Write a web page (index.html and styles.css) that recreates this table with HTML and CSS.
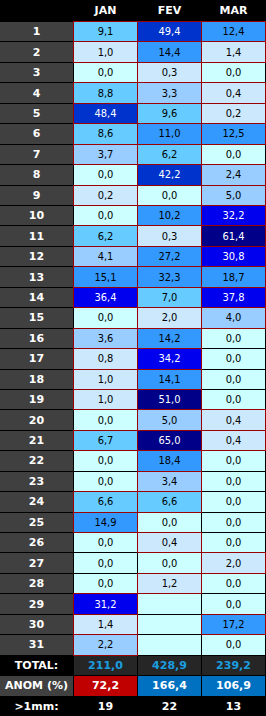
FILE: index.html
```html
<!DOCTYPE html>
<html>
<head>
<meta charset="utf-8">
<link rel="stylesheet" href="styles.css">
</head>
<body>
<div class="tbl">
  <div class="hd"></div><div class="hd">JAN</div><div class="hd">FEV</div><div class="hd">MAR</div>
  <div class="lb">1</div><div class="c v6 rb">9,1</div><div class="c v8 rb">49,4</div><div class="c v5 rb">12,4</div>
  <div class="lb">2</div><div class="c v2 rb">1,0</div><div class="c v5 rb">14,4</div><div class="c v2 rb">1,4</div>
  <div class="lb">3</div><div class="c v0">0,0</div><div class="c v2 rb">0,3</div><div class="c v0">0,0</div>
  <div class="lb">4</div><div class="c v6 rb">8,8</div><div class="c v3 rb">3,3</div><div class="c v2 rb">0,4</div>
  <div class="lb">5</div><div class="c v8 rb">48,4</div><div class="c v6 rb">9,6</div><div class="c v2 rb">0,2</div>
  <div class="lb">6</div><div class="c v6 rb">8,6</div><div class="c v5 rb">11,0</div><div class="c v5 rb">12,5</div>
  <div class="lb">7</div><div class="c v3 rb">3,7</div><div class="c v6 rb">6,2</div><div class="c v0">0,0</div>
  <div class="lb">8</div><div class="c v0">0,0</div><div class="c v8 rb">42,2</div><div class="c v3 rb">2,4</div>
  <div class="lb">9</div><div class="c v2 rb">0,2</div><div class="c v0">0,0</div><div class="c v3 rb">5,0</div>
  <div class="lb">10</div><div class="c v0">0,0</div><div class="c v5 rb">10,2</div><div class="c v7 rb">32,2</div>
  <div class="lb">11</div><div class="c v6 rb">6,2</div><div class="c v2 rb">0,3</div><div class="c v9 rb">61,4</div>
  <div class="lb">12</div><div class="c v3 rb">4,1</div><div class="c v5 rb">27,2</div><div class="c v7 rb">30,8</div>
  <div class="lb">13</div><div class="c v5 rb">15,1</div><div class="c v5 rb">32,3</div><div class="c v5 rb">18,7</div>
  <div class="lb">14</div><div class="c v7 rb">36,4</div><div class="c v6 rb">7,0</div><div class="c v7 rb">37,8</div>
  <div class="lb">15</div><div class="c v0">0,0</div><div class="c v2 rb">2,0</div><div class="c v3 rb">4,0</div>
  <div class="lb">16</div><div class="c v3 rb">3,6</div><div class="c v5 rb">14,2</div><div class="c v0">0,0</div>
  <div class="lb">17</div><div class="c v2 rb">0,8</div><div class="c v7 rb">34,2</div><div class="c v0">0,0</div>
  <div class="lb">18</div><div class="c v2 rb">1,0</div><div class="c v5 rb">14,1</div><div class="c v0">0,0</div>
  <div class="lb">19</div><div class="c v2 rb">1,0</div><div class="c v9 rb">51,0</div><div class="c v0">0,0</div>
  <div class="lb">20</div><div class="c v0">0,0</div><div class="c v3 rb">5,0</div><div class="c v2 rb">0,4</div>
  <div class="lb">21</div><div class="c v6 rb">6,7</div><div class="c v9 rb">65,0</div><div class="c v2 rb">0,4</div>
  <div class="lb">22</div><div class="c v0">0,0</div><div class="c v5 rb">18,4</div><div class="c v0">0,0</div>
  <div class="lb">23</div><div class="c v0">0,0</div><div class="c v3 rb">3,4</div><div class="c v0">0,0</div>
  <div class="lb">24</div><div class="c v6 rb">6,6</div><div class="c v6 rb">6,6</div><div class="c v0">0,0</div>
  <div class="lb">25</div><div class="c v5 rb">14,9</div><div class="c v0">0,0</div><div class="c v0">0,0</div>
  <div class="lb">26</div><div class="c v0">0,0</div><div class="c v2 rb">0,4</div><div class="c v0">0,0</div>
  <div class="lb">27</div><div class="c v0">0,0</div><div class="c v0">0,0</div><div class="c v2 rb">2,0</div>
  <div class="lb">28</div><div class="c v0">0,0</div><div class="c v2 rb">1,2</div><div class="c v0">0,0</div>
  <div class="lb">29</div><div class="c v7 rb">31,2</div><div class="c v0"></div><div class="c v0">0,0</div>
  <div class="lb">30</div><div class="c v2 rb">1,4</div><div class="c v0"></div><div class="c v5 rb">17,2</div>
  <div class="lb">31</div><div class="c v3 rb">2,2</div><div class="c v0"></div><div class="c v0">0,0</div>
  <div class="sl">TOTAL:</div><div class="tot">211,0</div><div class="tot">428,9</div><div class="tot">239,2</div>
  <div class="sl gray">ANOM (%)</div><div class="an neg">72,2</div><div class="an pos">166,4</div><div class="an pos">106,9</div>
  <div class="sl">&gt;1mm:</div><div class="cnt">19</div><div class="cnt">22</div><div class="cnt">13</div>
</div>
</body>
</html>
```
FILE: styles.css
```css
html, body {
  margin: 0;
  padding: 0;
  background: #000;
}
.tbl {
  width: 265px;
  height: 716px;
  padding-right: 1px;
  display: grid;
  grid-template-columns: 73px 63px 63px 63px;
  grid-template-rows: 21px repeat(34, 1fr);
  column-gap: 1px;
  row-gap: 1px;
  background: #000;
  font-family: "DejaVu Sans Condensed", "DejaVu Sans", sans-serif;
  font-stretch: condensed;
  font-size: 11px;
}
.tbl > div {
  display: flex;
  align-items: center;
  justify-content: center;
  white-space: nowrap;
}
.hd, .lb, .sl, .tot, .an, .cnt {
  font-family: "DejaVu Sans", sans-serif;
  font-stretch: normal;
  font-weight: bold;
}
.hd {
  background: #000;
  color: #fff;
}
.lb {
  background: #404040;
  color: #fff;
}
.c { color: #000; }
.rb { box-shadow: 0 0 0 1px #9a0000; }
.v0 { background: #ccffff; }
.v2 { background: #cce8fc; }
.v3 { background: #99ccff; }
.v6 { background: #66ccff; }
.v5 { background: #3399ff; }
.v7 { background: #0000ee; color: #fff; }
.v8 { background: #0033cc; color: #fff; }
.v9 { background: #000088; color: #fff; }
.sl {
  background: #000;
  color: #fff;
}
.sl.gray { background: #404040; }
.tot {
  background: #262626;
  color: #1a9ee0;
}
.an { color: #fff; }
.an.neg { background: #c00000; }
.an.pos { background: #0070c0; }
.cnt {
  background: #000;
  color: #fff;
}
```
